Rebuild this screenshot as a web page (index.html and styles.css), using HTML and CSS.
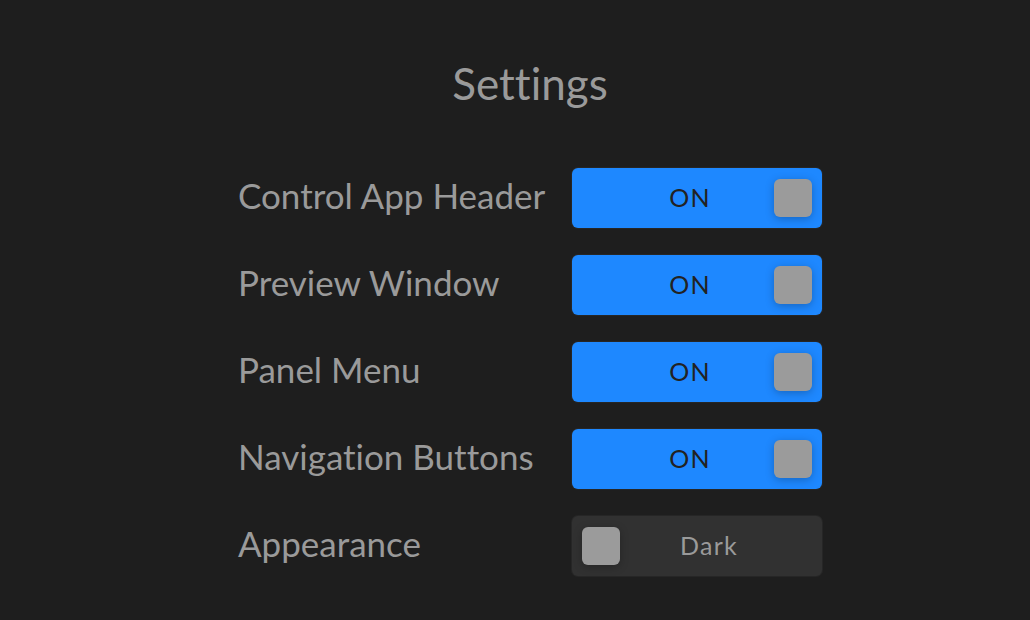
FILE: index.html
```html
<!DOCTYPE html>
<html>

<head>
  <title>Settings</title>
  <link rel="stylesheet" href="styles.css">
</head>

<body>
  <div class="container">
    <h1>Settings</h1>

    <div class="settings">
      <span class="label">Control App Header</span>
      <div class="toggle on"><span class="text">ON</span><span class="knob"></span></div>

      <span class="label">Preview Window</span>
      <div class="toggle on"><span class="text">ON</span><span class="knob"></span></div>

      <span class="label">Panel Menu</span>
      <div class="toggle on"><span class="text">ON</span><span class="knob"></span></div>

      <span class="label">Navigation Buttons</span>
      <div class="toggle on"><span class="text">ON</span><span class="knob"></span></div>

      <span class="label">Appearance</span>
      <div class="toggle off"><span class="text">Dark</span><span class="knob"></span></div>
    </div>
  </div>
</body>

</html>
```

FILE: styles.css
```css
body {
  font-family: Lato, "Liberation Sans", sans-serif;
  font-variant-ligatures: none;
  background-color: #1e1e1e;
  color: #9a9a9a;
  margin: 0;
  padding: 0;
  height: 620px;
  overflow: hidden;
}

.container {
  width: 584px;
  margin: 0 auto;
  padding: 0 0 0 30px;
}

h1 {
  font-size: 44px;
  font-weight: normal;
  line-height: 53px;
  text-align: center;
  margin: 0;
  padding-top: 57px;
  color: #9a9a9a;
}

.settings {
  display: grid;
  grid-template-columns: 334px 250px;
  row-gap: 27px;
  margin-top: 58px;
  align-items: center;
}

.label {
  font-size: 35px;
  line-height: 42px;
  margin-top: -7px;
}

.toggle {
  position: relative;
  height: 60px;
  box-sizing: border-box;
  padding-bottom: 3px;
  border-radius: 6px;
  box-shadow: 0 0 0 1px #262626;
  display: flex;
  align-items: center;
  justify-content: center;
  font-size: 25px;
  letter-spacing: 0.05em;
}

.toggle.on {
  background: #1e88ff;
  color: #222;
  padding-right: 14px;
}

.toggle.off {
  background: #313131;
  color: #9a9a9a;
  padding-left: 24px;
}

.knob {
  position: absolute;
  top: 11px;
  width: 38px;
  height: 38px;
  border-radius: 6px;
  background: #9b9b9b;
  box-shadow: 0 2px 8px rgba(0, 0, 0, 0.25);
}

.toggle.on .knob {
  right: 10px;
}

.toggle.off .knob {
  left: 10px;
}
```
